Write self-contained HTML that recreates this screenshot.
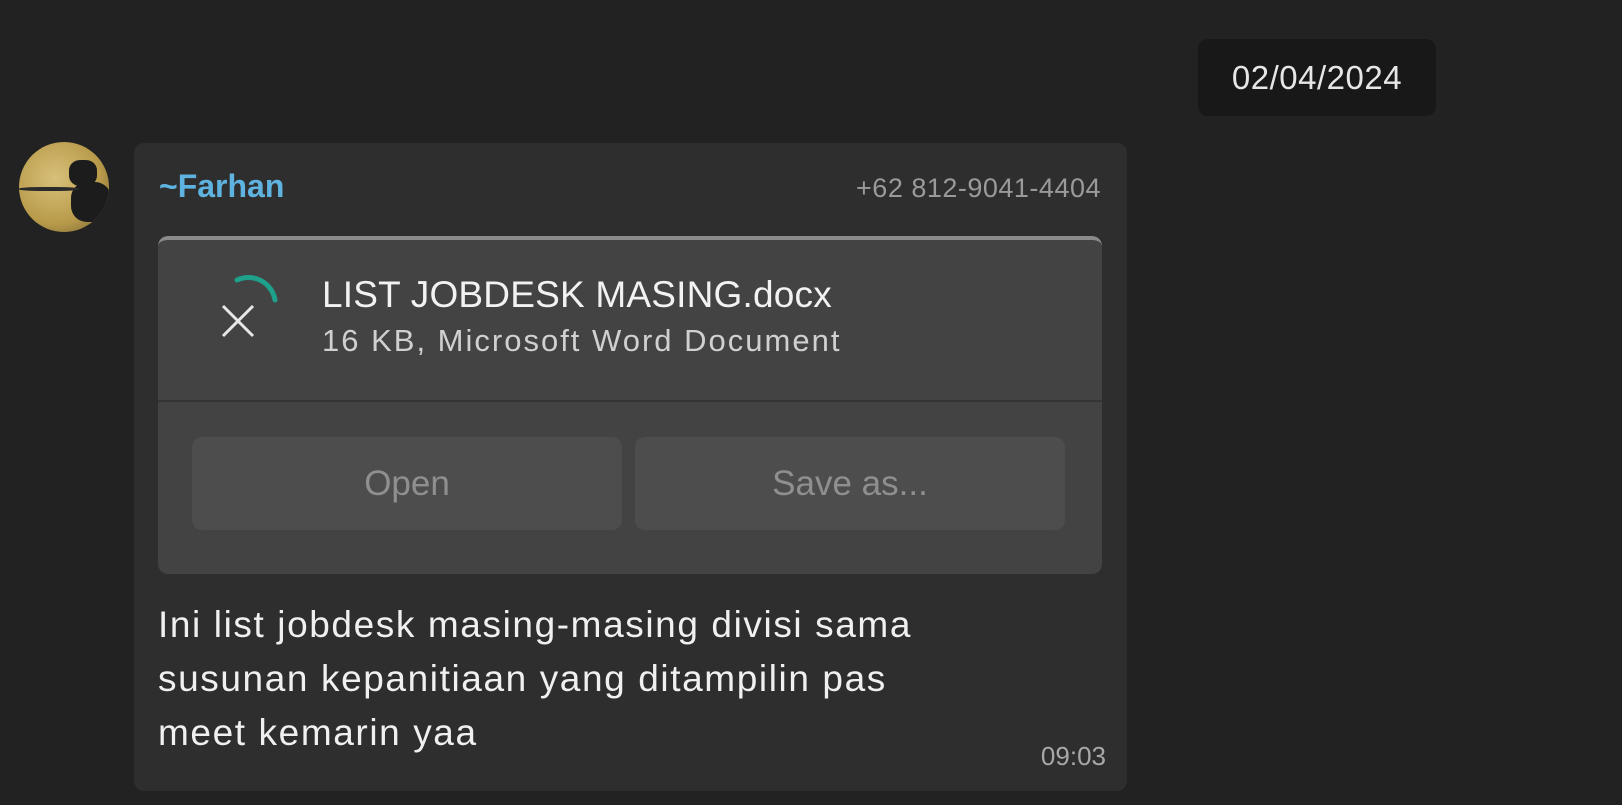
<!DOCTYPE html>
<html><head><meta charset="utf-8"><style>
*{margin:0;padding:0;box-sizing:border-box}
body{width:1622px;height:805px;background:#222;font-family:"Segoe UI","Liberation Sans",sans-serif;position:relative;overflow:hidden}
.date{position:absolute;left:1198px;top:39px;width:238px;height:77px;background:#181818;border-radius:10px;color:#e6e6e6;font-size:33px;letter-spacing:0.5px;display:flex;align-items:center;justify-content:center}
.av{position:absolute;left:19px;top:142px;width:90px;height:90px;border-radius:50%;background:radial-gradient(circle at 40% 40%,#d8c07a,#b89a4a 60%,#6a5a30);overflow:hidden}
.av i{position:absolute;background:#1c1c1c;border-radius:40%}
.bub{position:absolute;left:134px;top:143px;width:993px;height:648px;background:#2e2e2e;border-radius:10px}
.name{position:absolute;left:25px;top:25px;color:#5fb3e0;font-size:32px;font-weight:bold}
.ph{position:absolute;right:26px;top:30px;color:#9a9a9a;font-size:27px;letter-spacing:0.5px}
.card{position:absolute;left:24px;top:93px;width:944px;height:338px;background:#434343;border-radius:10px;border-top:4px solid #8a8a8a}
.div{position:absolute;left:0;right:0;top:160px;height:2px;background:#353535}
.t1{position:absolute;left:164px;top:34px;color:#f2f2f2;font-size:37px;letter-spacing:0.2px}
.t2{position:absolute;left:164px;top:83px;color:#d0d0d0;font-size:31px;letter-spacing:2px}
.btn{position:absolute;top:197px;height:93px;background:#4d4d4d;border-radius:10px;color:#8f8f8f;font-size:35px;display:flex;align-items:center;justify-content:center}
.msg{position:absolute;left:24px;top:455px;color:#f0f0f0;font-size:37px;line-height:54px;letter-spacing:1.6px}
.tm{position:absolute;right:21px;top:598px;color:#a8a8a8;font-size:26px}
</style></head><body>
<div class="date">02/04/2024</div>
<div class="av"><i style="left:50px;top:18px;width:28px;height:26px"></i><i style="left:52px;top:40px;width:40px;height:40px"></i><i style="left:0;top:45px;width:60px;height:4px;background:#2a2a2a"></i></div>
<div class="bub">
<div class="name">~Farhan</div>
<div class="ph">+62 812-9041-4404</div>
<div class="card">
<svg style="position:absolute;left:55px;top:30px" width="74" height="74" viewBox="0 0 74 74"><path d="M24 10 A27 27 0 0 1 62 30" fill="none" stroke="#1fa08a" stroke-width="5" stroke-linecap="round"/><path d="M10 36 L40 66 M40 36 L10 66" stroke="#e8e8e8" stroke-width="3"/></svg>
<div class="t1">LIST JOBDESK MASING.docx</div>
<div class="t2">16 KB, Microsoft Word Document</div>
<div class="div"></div>
<div class="btn" style="left:34px;width:430px">Open</div>
<div class="btn" style="left:477px;width:430px">Save as...</div>
</div>
<div class="msg">Ini list jobdesk masing-masing divisi sama<br>susunan kepanitiaan yang ditampilin pas<br>meet kemarin yaa</div>
<div class="tm">09:03</div>
</div>
</body></html>
